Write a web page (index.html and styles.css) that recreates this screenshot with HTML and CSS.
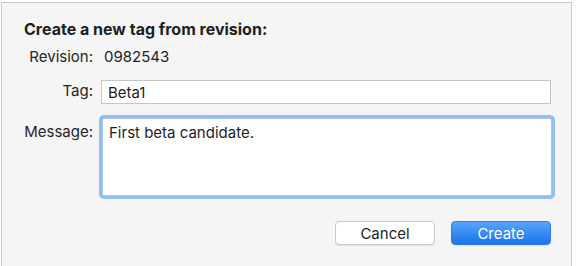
FILE: index.html
```
<!DOCTYPE html>
<html lang="en">
<head>
  <meta charset="UTF-8">
  <title>Create Tag</title>
  <link rel="stylesheet" href="styles.css">
</head>
<body>

<div class="hoja">
  <h2>Create a new tag from revision:</h2>

  <div class="formulario">
    <span class="etiqueta">Revision:</span>
    <span class="valor">0982543</span>

    <label class="etiqueta" for="tag">Tag:</label>
    <input type="text" id="tag" value="Beta1">

    <label class="etiqueta etiqueta-arriba" for="mensaje">Message:</label>
    <textarea id="mensaje">First beta candidate.</textarea>
  </div>

  <div class="botones">
    <button class="boton">Cancel</button>
    <button class="boton boton-principal">Create</button>
  </div>
</div>

</body>
</html>
```

FILE: styles.css
```
body {
  margin: 0;
  padding: 0;
  background-color: #ffffff;
  font-family: Inter, 'Liberation Sans', sans-serif;
  color: #222222;
}

.hoja {
  margin: 2px 4px 0 1px;
  height: 264px;
  box-sizing: border-box;
  background-color: #f5f5f5;
  border: 1px solid #cbcbcb;
  border-bottom: none;
  padding: 17px 20px 0 22px;
}

h2 {
  margin: 0 0 10px 0;
  font-size: 16px;
  line-height: 18px;
  font-weight: 700;
  color: #1e1e1e;
}

.formulario {
  display: grid;
  grid-template-columns: 69px 450px;
  column-gap: 8px;
  row-gap: 0;
  align-items: center;
  font-size: 15px;
  line-height: 18px;
}

.etiqueta {
  text-align: right;
  color: #262626;
}

.etiqueta-arriba {
  align-self: start;
  padding-top: 8px;
}

.valor {
  padding-left: 3px;
}

input[type="text"] {
  height: 24px;
  box-sizing: border-box;
  margin: 14px 0 11px 0;
  padding: 0 6px;
  border: 1px solid #c6c6c6;
  background-color: #ffffff;
  font-family: inherit;
  font-size: 15px;
  color: #1e1e1e;
  outline: none;
}

textarea {
  height: 78px;
  width: 450px;
  box-sizing: border-box;
  margin: 3px 0 0 1px;
  padding: 5px 6px;
  border: 1px solid #a4c6f3;
  box-shadow: 0 0 0 3px #95bdf2;
  border-radius: 2px;
  background-color: #ffffff;
  font-family: inherit;
  font-size: 15px;
  line-height: 18px;
  color: #1e1e1e;
  resize: none;
  outline: none;
}

.botones {
  display: flex;
  justify-content: flex-end;
  gap: 16px;
  margin-top: 25px;
}

.boton {
  width: 100px;
  height: 24px;
  border-radius: 4px;
  border: 1px solid #c9c9c9;
  background-color: #ffffff;
  font-family: inherit;
  font-size: 15px;
  color: #1e1e1e;
  box-shadow: 0 1px 1px rgba(0, 0, 0, 0.08);
}

.boton-principal {
  border-color: #2f7de6;
  background: linear-gradient(#55a6fa, #1c72ea);
  color: #ffffff;
}
```
